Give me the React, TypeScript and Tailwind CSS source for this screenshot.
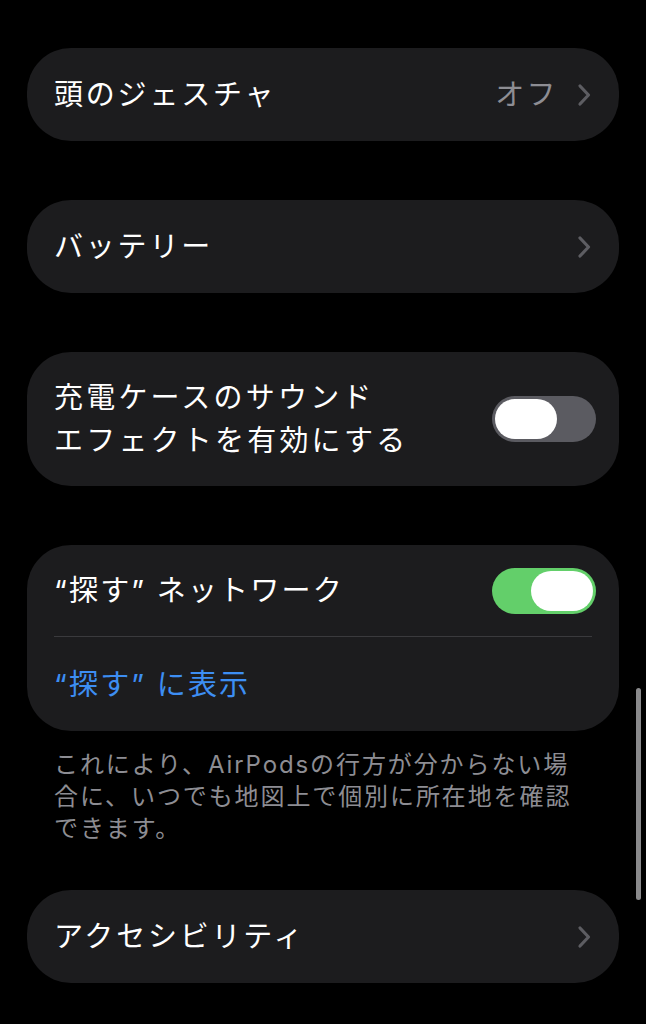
import React from "react";

const font = { fontFamily: '"Inter", "Noto Sans CJK JP", sans-serif' };

function Chevron() {
  return (
    <svg width="14" height="24" viewBox="0 0 14 24" fill="none" className="shrink-0">
      <path d="M3 3 L11.5 12 L3 21" stroke="#5d5d62" strokeWidth="3.2" strokeLinecap="round" strokeLinejoin="round" />
    </svg>
  );
}

function Toggle({ on }: { on: boolean }) {
  return (
    <div
      className={
        "w-[104px] h-[46px] rounded-full p-[3px] flex items-center shrink-0 " +
        (on ? "bg-[#63cf6a] justify-end" : "bg-[#5b5b61] justify-start")
      }
    >
      <div className="w-[62px] h-[40px] rounded-full bg-white" />
    </div>
  );
}

function LinkRow({ label, value }: { label: string; value?: string }) {
  return (
    <div className="h-[93px] rounded-[44px] bg-[#1c1c1e] flex items-center pl-[27px] pr-[28px]">
      <span className="text-white text-[29px] tracking-[2.8px] leading-none">{label}</span>
      <div className="ml-auto flex items-center gap-[19px]">
        {value && <span className="text-[#8d8d93] text-[29px] tracking-[2.4px] leading-none">{value}</span>}
        <Chevron />
      </div>
    </div>
  );
}

export default function App() {
  return (
    <div className="min-h-[1024px] bg-black overflow-hidden relative" style={font}>
      <div className="px-[27px] pt-[48px] flex flex-col">
        <LinkRow label="頭のジェスチャ" value="オフ" />

        <div className="mt-[59px]">
          <LinkRow label="バッテリー" />
        </div>

        <div className="mt-[59px] h-[134px] rounded-[44px] bg-[#1c1c1e] flex items-center pl-[27px] pr-[23px]">
          <span className="text-white text-[29px] tracking-[3.2px] leading-[43px]">
            充電ケースのサウンド
            <br />
            エフェクトを有効にする
          </span>
          <div className="ml-auto">
            <Toggle on={false} />
          </div>
        </div>

        <div className="mt-[59px] rounded-[44px] bg-[#1c1c1e] pl-[27px] pr-[23px]">
          <div className="h-[91px] flex items-center">
            <span className="text-white text-[29px] tracking-[2.2px] leading-none">“探す” ネットワーク</span>
            <div className="ml-auto">
              <Toggle on={true} />
            </div>
          </div>
          <div className="h-px bg-[#3a3a3d] mr-[4px]" />
          <div className="h-[94px] flex items-center">
            <span className="text-[#3d8ef3] text-[29px] tracking-[2.2px] leading-none">“探す” に表示</span>
          </div>
        </div>

        <p className="mt-[18px] px-[27px] text-[#8d8d93] text-[24px] tracking-[1.9px] leading-[32px] whitespace-nowrap">
          これにより、AirPodsの行方が分からない場
          <br />
          合に、いつでも地図上で個別に所在地を確認
          <br />
          できます。
        </p>

        <div className="mt-[45px]">
          <LinkRow label="アクセシビリティ" />
        </div>
      </div>

      {/* scroll indicator */}
      <div className="absolute left-[636px] top-[688px] w-[5px] h-[212px] rounded-full bg-[#8a8a8c]" />
    </div>
  );
}
